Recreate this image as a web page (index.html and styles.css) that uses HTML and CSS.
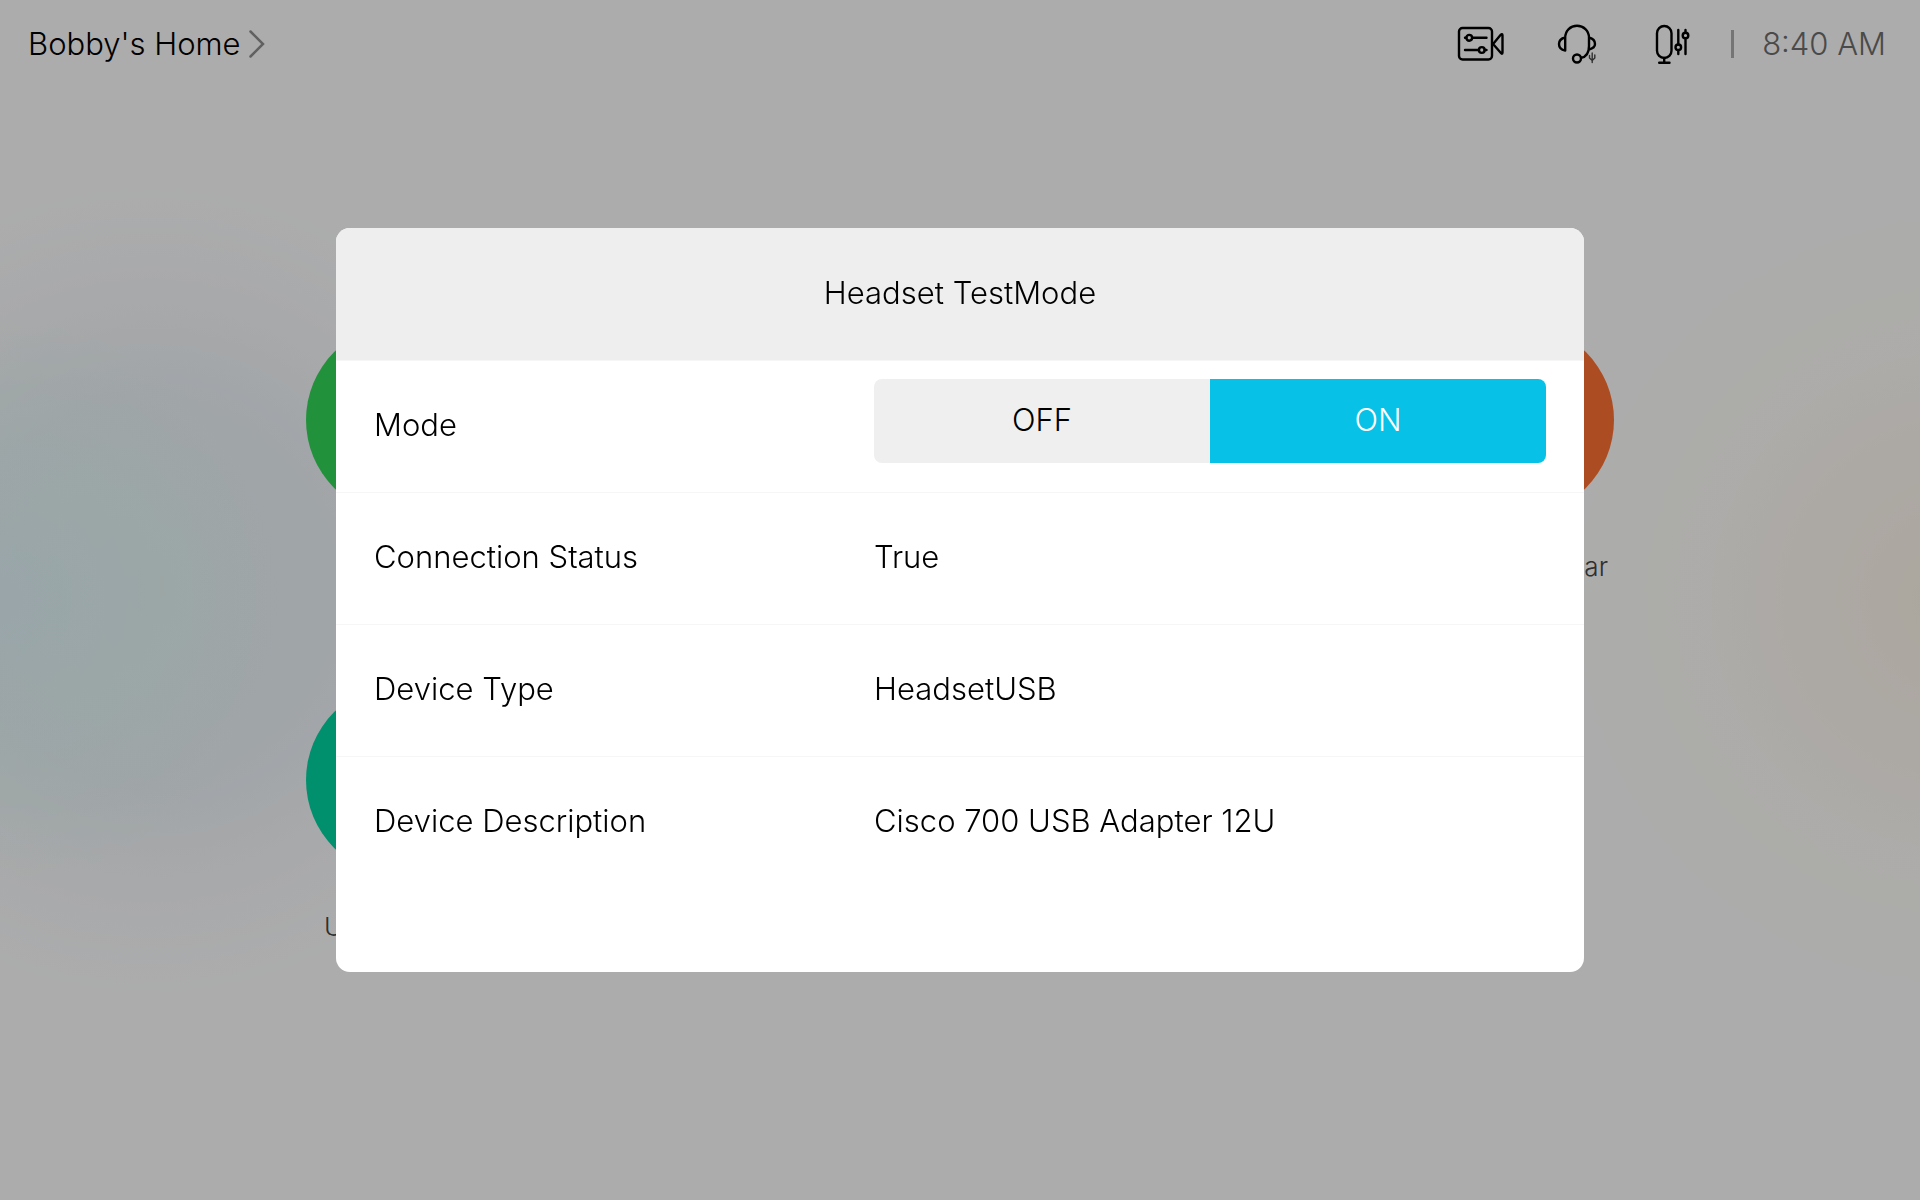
FILE: index.html
```html
<!DOCTYPE html>
<html lang="en">
<head>
<meta charset="utf-8">
<meta name="viewport" content="width=device-width, initial-scale=1">
<title>Headset TestMode</title>
<link rel="stylesheet" href="styles.css">
</head>
<body>
<div class="home">
  <header class="topbar">
    <a class="site" href="#">
      <span>Bobby's Home</span>
      <svg class="chevron" viewBox="0 0 16 28" aria-hidden="true"><path d="M1.5 1.5 14 14 1.5 26.5"/></svg>
    </a>
    <div class="status">
      <nav class="tools">
        <button class="tool" type="button" aria-label="Camera">
          <svg viewBox="0 0 48 48" aria-hidden="true">
            <rect x="3" y="8" width="33" height="31.500" rx="3.500"/>
            <path d="M37.500 23.500 44.500 15Q46.500 13 46.500 15.500V32.500Q46.500 35 44.500 32.500L37.500 24.500M17 17.800H30.500M9 17.800H10.500M9 30H23M28.500 30H30.500"/>
            <circle cx="13.200" cy="17.800" r="2.900"/><circle cx="25.800" cy="30" r="2.900"/>
          </svg>
        </button>
        <button class="tool" type="button" aria-label="Headset">
          <svg viewBox="0 0 48 48" aria-hidden="true">
            <path d="M13.200 30.500V17.700C13.200 10.500 18.500 5.800 25 5.800S37 10.500 37 17.700V26C37 33 34 37 29 37.800M13.200 17.500C9 18.500 7 21 7 24S9 29.800 13.200 30.500M37 17.500C41 18.500 43 21 43 24S41 28.500 37 29.500"/>
            <circle cx="25" cy="38.500" r="4"/>
            <path class="fine" d="M40.200 33V42.500M37.500 35.500V38L40.200 40.500 42.800 38V35"/>
          </svg>
        </button>
        <button class="tool" type="button" aria-label="Microphone">
          <svg viewBox="0 0 48 48" aria-hidden="true">
            <rect x="9" y="6" width="14.500" height="32" rx="7.250"/>
            <path d="M16.200 38V42.700M11.200 42.700H21.500M30.300 10V24.300M30.300 30V34M37.500 18.500V34M37.500 10V12.700"/>
            <circle cx="30.300" cy="27.300" r="2.800"/><circle cx="37.500" cy="15.500" r="2.800"/>
          </svg>
        </button>
      </nav>
      <span class="divider"></span>
      <time class="clock" datetime="08:40">8:40 AM</time>
    </div>
  </header>
  <main class="tiles">
    <div class="tile">
      <button class="disc disc-green" type="button" aria-label="Call"></button>
    </div>
    <div class="tile">
      <button class="disc disc-orange" type="button" aria-label="Open"></button>
      <span class="tile-label tile-label-end">ar</span>
    </div>
    <div class="tile">
      <button class="disc disc-teal" type="button" aria-label="Open"></button>
      <span class="tile-label">U</span>
    </div>
  </main>
</div>

<div class="overlay">
  <section class="dialog" role="dialog" aria-modal="true" aria-labelledby="dialog-title">
    <h1 class="dialog-title" id="dialog-title">Headset TestMode</h1>
    <div class="rows">
      <div class="row">
        <span class="name" id="mode-name">Mode</span>
        <div class="switch" role="group" aria-labelledby="mode-name">
          <button class="option" type="button" aria-pressed="false">OFF</button>
          <button class="option option-active" type="button" aria-pressed="true">ON</button>
        </div>
      </div>
      <div class="row"><span class="name">Connection Status</span><span class="value">True</span></div>
      <div class="row"><span class="name">Device Type</span><span class="value">HeadsetUSB</span></div>
      <div class="row"><span class="name">Device Description</span><span class="value">Cisco 700 USB Adapter 12U</span></div>
    </div>
  </section>
</div>
</body>
</html>
```
FILE: styles.css
```css
* {
  box-sizing: border-box;
}

body {
  margin: 0;
  font-family: Inter, "Liberation Sans", sans-serif;
  font-size: 31px;
  font-weight: 300;
  line-height: 40px;
  color: #000;
}

button {
  margin: 0;
  padding: 0;
  border: 0;
  background: none;
  font: inherit;
  color: inherit;
}

/* Home screen */
.home {
  min-height: 100vh;
  background:
    radial-gradient(circle 280px at 0 600px, rgba(215, 238, 243, 0.7), rgba(218, 240, 236, 0.45) 60%, rgba(225, 240, 240, 0)),
    radial-gradient(circle 430px at 150px 590px, rgba(224, 237, 239, 0.9), rgba(227, 234, 240, 0.8) 45%, rgba(238, 240, 243, 0.45) 75%, rgba(247, 247, 247, 0)),
    radial-gradient(circle 420px at 1960px 600px, #f6f0e0, #f7f1ea 30%, rgba(247, 245, 240, 0.7) 60%, rgba(247, 247, 247, 0)),
    #f7f7f7;
}

.topbar {
  display: flex;
  align-items: center;
  justify-content: space-between;
  height: 88px;
  padding: 0 34px 0 28px;
}

.site {
  display: flex;
  align-items: center;
  gap: 8px;
  color: inherit;
  text-decoration: none;
}

.chevron {
  width: 16px;
  height: 28px;
  fill: none;
  stroke: #8b8b8b;
  stroke-width: 2.5;
  stroke-linecap: round;
}

.status {
  display: flex;
  align-items: center;
}

.tools {
  display: flex;
  gap: 48px;
}

.tool {
  width: 48px;
  height: 48px;
}

.tool svg {
  display: block;
  fill: none;
  stroke: #000;
  stroke-width: 2.4;
  stroke-linecap: round;
  stroke-linejoin: round;
}

.tool .fine {
  stroke: #444;
  stroke-width: 1.4;
}

.divider {
  width: 3px;
  height: 28px;
  margin: 0 28px 0 35px;
  background: #a8a8a8;
}

.clock {
  color: #6a6a6a;
}

.tiles {
  display: grid;
  grid-template-columns: 192px 192px;
  grid-auto-rows: 360px;
  justify-content: space-between;
  padding: 236px 306px 0;
}

.tile {
  display: flex;
  flex-direction: column;
  gap: 32px;
}

.disc {
  width: 192px;
  height: 192px;
  border-radius: 50%;
}

.disc-green {
  background: #32d056;
}

.disc-orange {
  background: #f66e32;
}

.disc-teal {
  background: #00cf9d;
}

.tile-label {
  padding: 0 6px 0 18px;
  font-size: 26px;
  line-height: 38px;
  color: #444;
}

.tile-label-end {
  text-align: right;
}

/* Dialog */
.overlay {
  position: fixed;
  inset: 0;
  display: flex;
  align-items: center;
  justify-content: center;
  background: rgba(0, 0, 0, 0.3);
}

.dialog {
  width: 65%;
  overflow: hidden;
  border-radius: 14px;
  background: #fff;
}

.dialog-title {
  margin: 0;
  padding: 45px 0 47px;
  background: #eee;
  font-size: 31px;
  font-weight: 300;
  line-height: 40px;
  text-align: center;
}

.rows {
  padding-bottom: 83px;
  border-top: 1px solid #f6f6f6;
}

.row {
  display: grid;
  grid-template-columns: 125fr 168fr;
  align-items: center;
  min-height: 132px;
  padding: 0 38px 3px;
  border-bottom: 1px solid #f6f6f6;
}

.row:last-child {
  border-bottom-color: transparent;
}

.switch {
  display: grid;
  grid-template-columns: 1fr 1fr;
  align-self: start;
  margin-top: 18px;
  overflow: hidden;
  border-radius: 8px;
}

.option {
  height: 84px;
  padding-bottom: 2px;
  background: #efefef;
}

.option-active {
  background: #07c1e6;
  color: #fff;
}
```
